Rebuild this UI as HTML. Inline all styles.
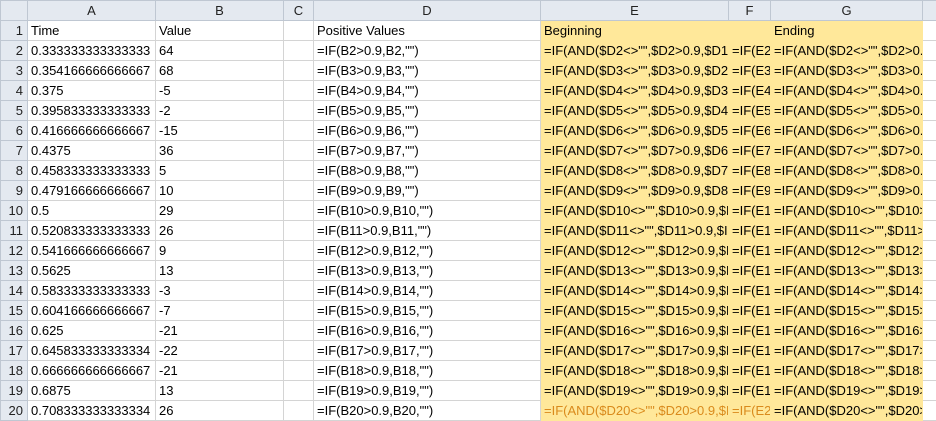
<!DOCTYPE html><html><head><style>
body{margin:0;width:936px;height:420px;overflow:hidden;background:#fff;font-family:"Liberation Sans",sans-serif;font-size:13px;color:#000}
table{border-collapse:collapse;table-layout:fixed;position:absolute;left:0;top:0;width:936px}
td{box-sizing:border-box;height:20px;border:1px solid #d4d4d4;padding:0 0 0 3px;white-space:nowrap;overflow:hidden;line-height:19px}
tr.h td{background:#e4e9f0;border-color:#bfc7d2;text-align:center;color:#222;padding:0;height:19px}
td.r{background:#e4e9f0;border-color:#bfc7d2;text-align:right;padding:0 4px 0 0;color:#222}
td.y{background:#ffe89a;border-color:#ffe89a}
tr.o td.y{color:#d98a1c}
tr.o td.g{color:#000}
</style></head><body>
<table>
<tr class="h"><td style="width:27px"></td><td style="width:128px">A</td><td style="width:128px">B</td><td style="width:30px">C</td><td style="width:227px">D</td><td style="width:188px">E</td><td style="width:42px">F</td><td style="width:152px">G</td><td style="width:14px"></td></tr>
<tr><td class="r">1</td><td>Time</td><td>Value</td><td></td><td>Positive Values</td><td class="y">Beginning</td><td class="y"></td><td class="y">Ending</td><td></td></tr>
<tr><td class="r">2</td><td>0.333333333333333</td><td>64</td><td></td><td>=IF(B2&gt;0.9,B2,"")</td><td class="y">=IF(AND($D2&lt;&gt;"",$D2&gt;0.9,$D1</td><td class="y">=IF(E2&lt;</td><td class="y g">=IF(AND($D2&lt;&gt;"",$D2&gt;0.9</td><td></td></tr>
<tr><td class="r">3</td><td>0.354166666666667</td><td>68</td><td></td><td>=IF(B3&gt;0.9,B3,"")</td><td class="y">=IF(AND($D3&lt;&gt;"",$D3&gt;0.9,$D2</td><td class="y">=IF(E3&lt;</td><td class="y g">=IF(AND($D3&lt;&gt;"",$D3&gt;0.9</td><td></td></tr>
<tr><td class="r">4</td><td>0.375</td><td>-5</td><td></td><td>=IF(B4&gt;0.9,B4,"")</td><td class="y">=IF(AND($D4&lt;&gt;"",$D4&gt;0.9,$D3</td><td class="y">=IF(E4&lt;</td><td class="y g">=IF(AND($D4&lt;&gt;"",$D4&gt;0.9</td><td></td></tr>
<tr><td class="r">5</td><td>0.395833333333333</td><td>-2</td><td></td><td>=IF(B5&gt;0.9,B5,"")</td><td class="y">=IF(AND($D5&lt;&gt;"",$D5&gt;0.9,$D4</td><td class="y">=IF(E5&lt;</td><td class="y g">=IF(AND($D5&lt;&gt;"",$D5&gt;0.9</td><td></td></tr>
<tr><td class="r">6</td><td>0.416666666666667</td><td>-15</td><td></td><td>=IF(B6&gt;0.9,B6,"")</td><td class="y">=IF(AND($D6&lt;&gt;"",$D6&gt;0.9,$D5</td><td class="y">=IF(E6&lt;</td><td class="y g">=IF(AND($D6&lt;&gt;"",$D6&gt;0.9</td><td></td></tr>
<tr><td class="r">7</td><td>0.4375</td><td>36</td><td></td><td>=IF(B7&gt;0.9,B7,"")</td><td class="y">=IF(AND($D7&lt;&gt;"",$D7&gt;0.9,$D6</td><td class="y">=IF(E7&lt;</td><td class="y g">=IF(AND($D7&lt;&gt;"",$D7&gt;0.9</td><td></td></tr>
<tr><td class="r">8</td><td>0.458333333333333</td><td>5</td><td></td><td>=IF(B8&gt;0.9,B8,"")</td><td class="y">=IF(AND($D8&lt;&gt;"",$D8&gt;0.9,$D7</td><td class="y">=IF(E8&lt;</td><td class="y g">=IF(AND($D8&lt;&gt;"",$D8&gt;0.9</td><td></td></tr>
<tr><td class="r">9</td><td>0.479166666666667</td><td>10</td><td></td><td>=IF(B9&gt;0.9,B9,"")</td><td class="y">=IF(AND($D9&lt;&gt;"",$D9&gt;0.9,$D8</td><td class="y">=IF(E9&lt;</td><td class="y g">=IF(AND($D9&lt;&gt;"",$D9&gt;0.9</td><td></td></tr>
<tr><td class="r">10</td><td>0.5</td><td>29</td><td></td><td>=IF(B10&gt;0.9,B10,"")</td><td class="y">=IF(AND($D10&lt;&gt;"",$D10&gt;0.9,$I</td><td class="y">=IF(E1</td><td class="y g">=IF(AND($D10&lt;&gt;"",$D10&gt;</td><td></td></tr>
<tr><td class="r">11</td><td>0.520833333333333</td><td>26</td><td></td><td>=IF(B11&gt;0.9,B11,"")</td><td class="y">=IF(AND($D11&lt;&gt;"",$D11&gt;0.9,$I</td><td class="y">=IF(E1</td><td class="y g">=IF(AND($D11&lt;&gt;"",$D11&gt;</td><td></td></tr>
<tr><td class="r">12</td><td>0.541666666666667</td><td>9</td><td></td><td>=IF(B12&gt;0.9,B12,"")</td><td class="y">=IF(AND($D12&lt;&gt;"",$D12&gt;0.9,$I</td><td class="y">=IF(E1</td><td class="y g">=IF(AND($D12&lt;&gt;"",$D12&gt;</td><td></td></tr>
<tr><td class="r">13</td><td>0.5625</td><td>13</td><td></td><td>=IF(B13&gt;0.9,B13,"")</td><td class="y">=IF(AND($D13&lt;&gt;"",$D13&gt;0.9,$I</td><td class="y">=IF(E1</td><td class="y g">=IF(AND($D13&lt;&gt;"",$D13&gt;</td><td></td></tr>
<tr><td class="r">14</td><td>0.583333333333333</td><td>-3</td><td></td><td>=IF(B14&gt;0.9,B14,"")</td><td class="y">=IF(AND($D14&lt;&gt;"",$D14&gt;0.9,$I</td><td class="y">=IF(E1</td><td class="y g">=IF(AND($D14&lt;&gt;"",$D14&gt;</td><td></td></tr>
<tr><td class="r">15</td><td>0.604166666666667</td><td>-7</td><td></td><td>=IF(B15&gt;0.9,B15,"")</td><td class="y">=IF(AND($D15&lt;&gt;"",$D15&gt;0.9,$I</td><td class="y">=IF(E1</td><td class="y g">=IF(AND($D15&lt;&gt;"",$D15&gt;</td><td></td></tr>
<tr><td class="r">16</td><td>0.625</td><td>-21</td><td></td><td>=IF(B16&gt;0.9,B16,"")</td><td class="y">=IF(AND($D16&lt;&gt;"",$D16&gt;0.9,$I</td><td class="y">=IF(E1</td><td class="y g">=IF(AND($D16&lt;&gt;"",$D16&gt;</td><td></td></tr>
<tr><td class="r">17</td><td>0.645833333333334</td><td>-22</td><td></td><td>=IF(B17&gt;0.9,B17,"")</td><td class="y">=IF(AND($D17&lt;&gt;"",$D17&gt;0.9,$I</td><td class="y">=IF(E1</td><td class="y g">=IF(AND($D17&lt;&gt;"",$D17&gt;</td><td></td></tr>
<tr><td class="r">18</td><td>0.666666666666667</td><td>-21</td><td></td><td>=IF(B18&gt;0.9,B18,"")</td><td class="y">=IF(AND($D18&lt;&gt;"",$D18&gt;0.9,$I</td><td class="y">=IF(E1</td><td class="y g">=IF(AND($D18&lt;&gt;"",$D18&gt;</td><td></td></tr>
<tr><td class="r">19</td><td>0.6875</td><td>13</td><td></td><td>=IF(B19&gt;0.9,B19,"")</td><td class="y">=IF(AND($D19&lt;&gt;"",$D19&gt;0.9,$I</td><td class="y">=IF(E1</td><td class="y g">=IF(AND($D19&lt;&gt;"",$D19&gt;</td><td></td></tr>
<tr class="o"><td class="r">20</td><td>0.708333333333334</td><td>26</td><td></td><td>=IF(B20&gt;0.9,B20,"")</td><td class="y">=IF(AND($D20&lt;&gt;"",$D20&gt;0.9,$I</td><td class="y">=IF(E2</td><td class="y g">=IF(AND($D20&lt;&gt;"",$D20&gt;</td><td></td></tr>
</table>
</body></html>
